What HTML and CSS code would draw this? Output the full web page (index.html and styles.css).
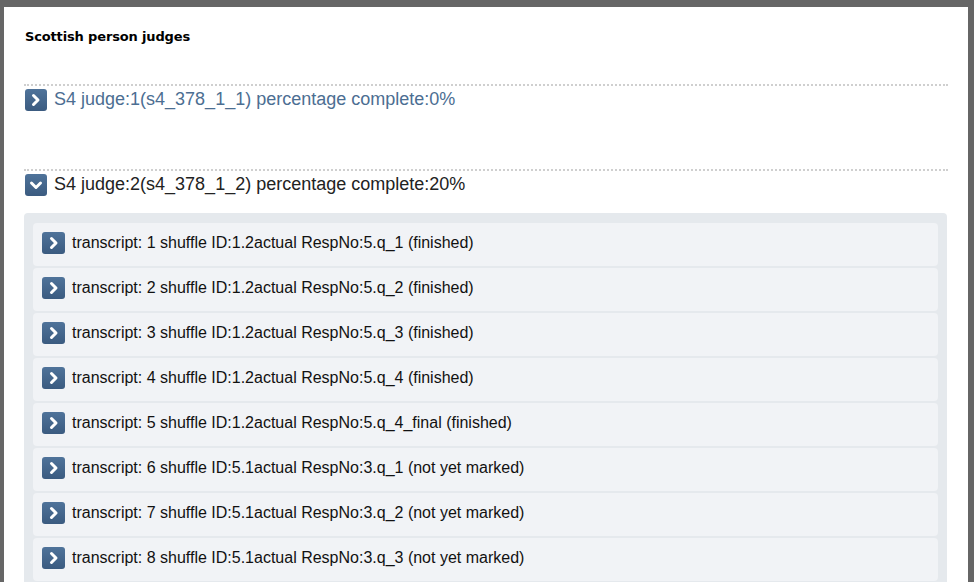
FILE: index.html
```html
<!DOCTYPE html>
<html>
<head>
<meta charset="utf-8">
<link rel="stylesheet" href="styles.css">
</head>
<body>
<div class="frame">
  <h1 class="title">Scottish person judges</h1>
  <div class="judge collapsed">
    <div class="judge-head">
      <span class="btn"><svg viewBox="0 0 22 22" width="22" height="22"><path d="M8.5 6.5 L13 11 L8.5 15.5" fill="none" stroke="#fff" stroke-width="3" stroke-linecap="round" stroke-linejoin="round"/></svg></span>
      <span class="judge-label muted">S4 judge:1(s4_378_1_1) percentage complete:0%</span>
    </div>
    <div class="judge-empty"></div>
  </div>
  <div class="judge">
    <div class="judge-head">
      <span class="btn"><svg viewBox="0 0 22 22" width="22" height="22"><path d="M6.5 9 L11 13.5 L15.5 9" fill="none" stroke="#fff" stroke-width="3" stroke-linecap="round" stroke-linejoin="round"/></svg></span>
      <span class="judge-label">S4 judge:2(s4_378_1_2) percentage complete:20%</span>
    </div>
    <div class="list">
      <div class="item"><span class="btn"><svg viewBox="0 0 22 22" width="22" height="22"><path d="M8.5 6.5 L13 11 L8.5 15.5" fill="none" stroke="#fff" stroke-width="3" stroke-linecap="round" stroke-linejoin="round"/></svg></span><span>transcript: 1 shuffle ID:1.2actual RespNo:5.q_1 (finished)</span></div>
      <div class="item"><span class="btn"><svg viewBox="0 0 22 22" width="22" height="22"><path d="M8.5 6.5 L13 11 L8.5 15.5" fill="none" stroke="#fff" stroke-width="3" stroke-linecap="round" stroke-linejoin="round"/></svg></span><span>transcript: 2 shuffle ID:1.2actual RespNo:5.q_2 (finished)</span></div>
      <div class="item"><span class="btn"><svg viewBox="0 0 22 22" width="22" height="22"><path d="M8.5 6.5 L13 11 L8.5 15.5" fill="none" stroke="#fff" stroke-width="3" stroke-linecap="round" stroke-linejoin="round"/></svg></span><span>transcript: 3 shuffle ID:1.2actual RespNo:5.q_3 (finished)</span></div>
      <div class="item"><span class="btn"><svg viewBox="0 0 22 22" width="22" height="22"><path d="M8.5 6.5 L13 11 L8.5 15.5" fill="none" stroke="#fff" stroke-width="3" stroke-linecap="round" stroke-linejoin="round"/></svg></span><span>transcript: 4 shuffle ID:1.2actual RespNo:5.q_4 (finished)</span></div>
      <div class="item"><span class="btn"><svg viewBox="0 0 22 22" width="22" height="22"><path d="M8.5 6.5 L13 11 L8.5 15.5" fill="none" stroke="#fff" stroke-width="3" stroke-linecap="round" stroke-linejoin="round"/></svg></span><span>transcript: 5 shuffle ID:1.2actual RespNo:5.q_4_final (finished)</span></div>
      <div class="item"><span class="btn"><svg viewBox="0 0 22 22" width="22" height="22"><path d="M8.5 6.5 L13 11 L8.5 15.5" fill="none" stroke="#fff" stroke-width="3" stroke-linecap="round" stroke-linejoin="round"/></svg></span><span>transcript: 6 shuffle ID:5.1actual RespNo:3.q_1 (not yet marked)</span></div>
      <div class="item"><span class="btn"><svg viewBox="0 0 22 22" width="22" height="22"><path d="M8.5 6.5 L13 11 L8.5 15.5" fill="none" stroke="#fff" stroke-width="3" stroke-linecap="round" stroke-linejoin="round"/></svg></span><span>transcript: 7 shuffle ID:5.1actual RespNo:3.q_2 (not yet marked)</span></div>
      <div class="item"><span class="btn"><svg viewBox="0 0 22 22" width="22" height="22"><path d="M8.5 6.5 L13 11 L8.5 15.5" fill="none" stroke="#fff" stroke-width="3" stroke-linecap="round" stroke-linejoin="round"/></svg></span><span>transcript: 8 shuffle ID:5.1actual RespNo:3.q_3 (not yet marked)</span></div>
    </div>
  </div>
</div>
</body>
</html>
```
FILE: styles.css
```css
html, body {
  margin: 0;
  padding: 0;
  background: #666666;
  height: 100%;
  overflow: hidden;
}
.frame {
  margin: 7px 6px 0 4px;
  background: #ffffff;
  padding: 22px 20px 0 20px;
  min-height: 600px;
  font-family: "Liberation Sans", Arial, sans-serif;
}
.title {
  margin: 0;
  font-family: "DejaVu Sans", Verdana, sans-serif;
  font-size: 13px;
  font-weight: bold;
  color: #000;
  line-height: 16px;
  padding-left: 1px;
  letter-spacing: -0.15px;
}
.judge {
  border-top: 2px dotted #cfcfcf;
}
.collapsed {
  margin-top: 39px;
}
.judge-head {
  display: flex;
  align-items: center;
  gap: 7px;
  padding: 2px 0 0 1px;
  height: 23px;
}
.judge-label {
  font-size: 18px;
  color: #222;
  line-height: 22px;
  margin-bottom: 2px;
}
.judge-label.muted {
  color: #4c6e92;
}
.judge-empty {
  height: 58px;
}
.btn {
  display: inline-flex;
  width: 22px;
  height: 22px;
  border-radius: 3px;
  background: linear-gradient(#4f739a, #3b5b80);
  flex: none;
}
.item .btn {
  width: 23px;
}
.item .btn svg {
  margin-left: 1px;
}
.list {
  margin-top: 17px;
  background: #e5e9ed;
  border-radius: 4px;
  padding: 10px 9px 9px 9px;
  display: flex;
  flex-direction: column;
  gap: 2px;
  width: 905px;
}
.item {
  height: 43px;
  background: #f1f3f6;
  border-radius: 4px;
  display: flex;
  align-items: center;
  gap: 7px;
  padding: 0 0 3px 9px;
  box-sizing: border-box;
  font-size: 16px;
  color: #111;
}
```
